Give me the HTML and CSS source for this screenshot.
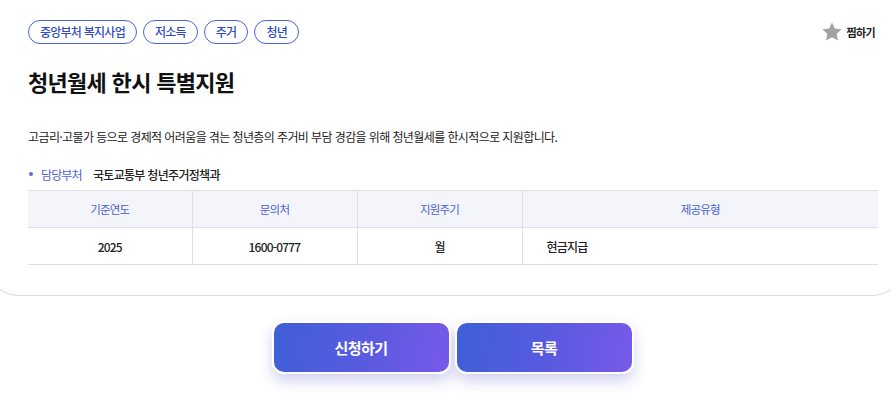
FILE: index.html
```html
<!DOCTYPE html>
<html lang="ko">
<head>
<meta charset="utf-8">
<link rel="stylesheet" href="styles.css">
</head>
<body>
<div class="page">
  <section class="card">
    <div class="top">
      <ul class="tags">
        <li class="tag">중앙부처 복지사업</li>
        <li class="tag">저소득</li>
        <li class="tag">주거</li>
        <li class="tag">청년</li>
      </ul>
      <button class="fav">
        <svg class="star" viewBox="0 0 24 24" width="22" height="22"><path d="M12 1.5l3.2 6.6 7.3.9-5.4 5 1.4 7.3L12 17.8l-6.5 3.5 1.4-7.3-5.4-5 7.3-.9z" fill="#a3a3a3"/></svg>
        <span>찜하기</span>
      </button>
    </div>
    <h1 class="title">청년월세 한시 특별지원</h1>
    <p class="desc">고금리·고물가 등으로 경제적 어려움을 겪는 청년층의 주거비 부담 경감을 위해 청년월세를 한시적으로 지원합니다.</p>
    <div class="dept"><span class="dot"></span><span class="dept-label">담당부처</span><span class="dept-name">국토교통부 청년주거정책과</span></div>
    <table class="info">
      <colgroup><col class="c1"><col class="c2"><col class="c3"><col class="c4"></colgroup>
      <thead>
        <tr><th>기준연도</th><th>문의처</th><th>지원주기</th><th>제공유형</th></tr>
      </thead>
      <tbody>
        <tr><td>2025</td><td>1600-0777</td><td>월</td><td class="left">현금지급</td></tr>
      </tbody>
    </table>
  </section>
  <div class="actions">
    <button class="btn">신청하기</button>
    <button class="btn">목록</button>
  </div>
</div>
</body>
</html>
```
FILE: styles.css
```css
* { box-sizing: border-box; }
html, body { margin: 0; padding: 0; background: #fff; }
body { font-family: "Noto Sans CJK KR", "Noto Sans", sans-serif; color: #222; }
.page { width: 891px; height: 400px; overflow: hidden; }
.card {
  width: 919px;
  margin-left: -14px;
  border: 1px solid #dedede;
  border-top: none;
  border-radius: 0 0 33px 33px;
  padding: 20px 27px 30px 41px;
}
.top { display: flex; justify-content: space-between; align-items: center; height: 24px; }
.tags { display: flex; gap: 6px; list-style: none; margin: 0; padding: 0; }
.tag {
  height: 24px;
  line-height: 22px;
  border: 1px solid #4a63d8;
  border-radius: 12px;
  padding: 0 11px;
  font-size: 12px;
  letter-spacing: -0.75px;
  color: #2f4bc6;
  font-weight: 500;
}
.fav {
  display: flex; align-items: center; gap: 3px;
  background: none; border: none; padding: 0; margin-right: 2px;
  font-family: inherit; font-size: 11px; font-weight: 700; letter-spacing: -0.6px; color: #222;
}
.star { display: block; margin-top: -1px; }
.title {
  margin: 22px 0 0;
  font-size: 22px; line-height: 30px; font-weight: 700; color: #111; letter-spacing: -0.7px;
}
.desc {
  margin: 32px 0 0;
  font-size: 12px; line-height: 18px; letter-spacing: -0.6px; color: #222;
}
.dept { display: flex; align-items: center; margin-top: 19px; height: 18px; font-size: 12px; letter-spacing: -0.9px; }
.dot { width: 4px; height: 4px; border-radius: 50%; background: #5a6fe0; margin: 0 8px 0 1px; }
.dept-label { color: #4f63dc; width: 52px; }
.dept-name { color: #222; font-weight: 500; letter-spacing: -0.7px; }
.info {
  margin-top: 7px;
  width: 850px;
  border-collapse: collapse;
  table-layout: fixed;
  font-size: 11.5px;
  letter-spacing: -0.8px;
}
.c1 { width: 164px; } .c2 { width: 165px; } .c3 { width: 165px; } .c4 { width: 356px; }
.info th, .info td { border: 1px solid #dfdfe4; text-align: center; }
.info tr > :first-child { border-left: none; }
.info tr > :last-child { border-right: none; }
.info th { height: 37px; background: #f4f5fa; color: #4a5fd4; font-weight: 400; }
.info td { height: 37px; color: #222; font-weight: 500; font-size: 12px; }
.info td.left { text-align: left; padding-left: 24px; }
.actions { display: flex; justify-content: center; gap: 4px; margin-top: 25px; padding-left: 14px; }
.btn {
  width: 179px; height: 53px;
  border: 2px solid #fff;
  border-radius: 12px;
  background: linear-gradient(100deg, #3f5fd8 0%, #5a5ae0 55%, #785ae9 100%);
  color: #fff;
  font-family: inherit; font-size: 15px; font-weight: 700; letter-spacing: -0.5px;
  box-shadow: 0 7px 14px rgba(90, 90, 200, 0.28);
}
```
